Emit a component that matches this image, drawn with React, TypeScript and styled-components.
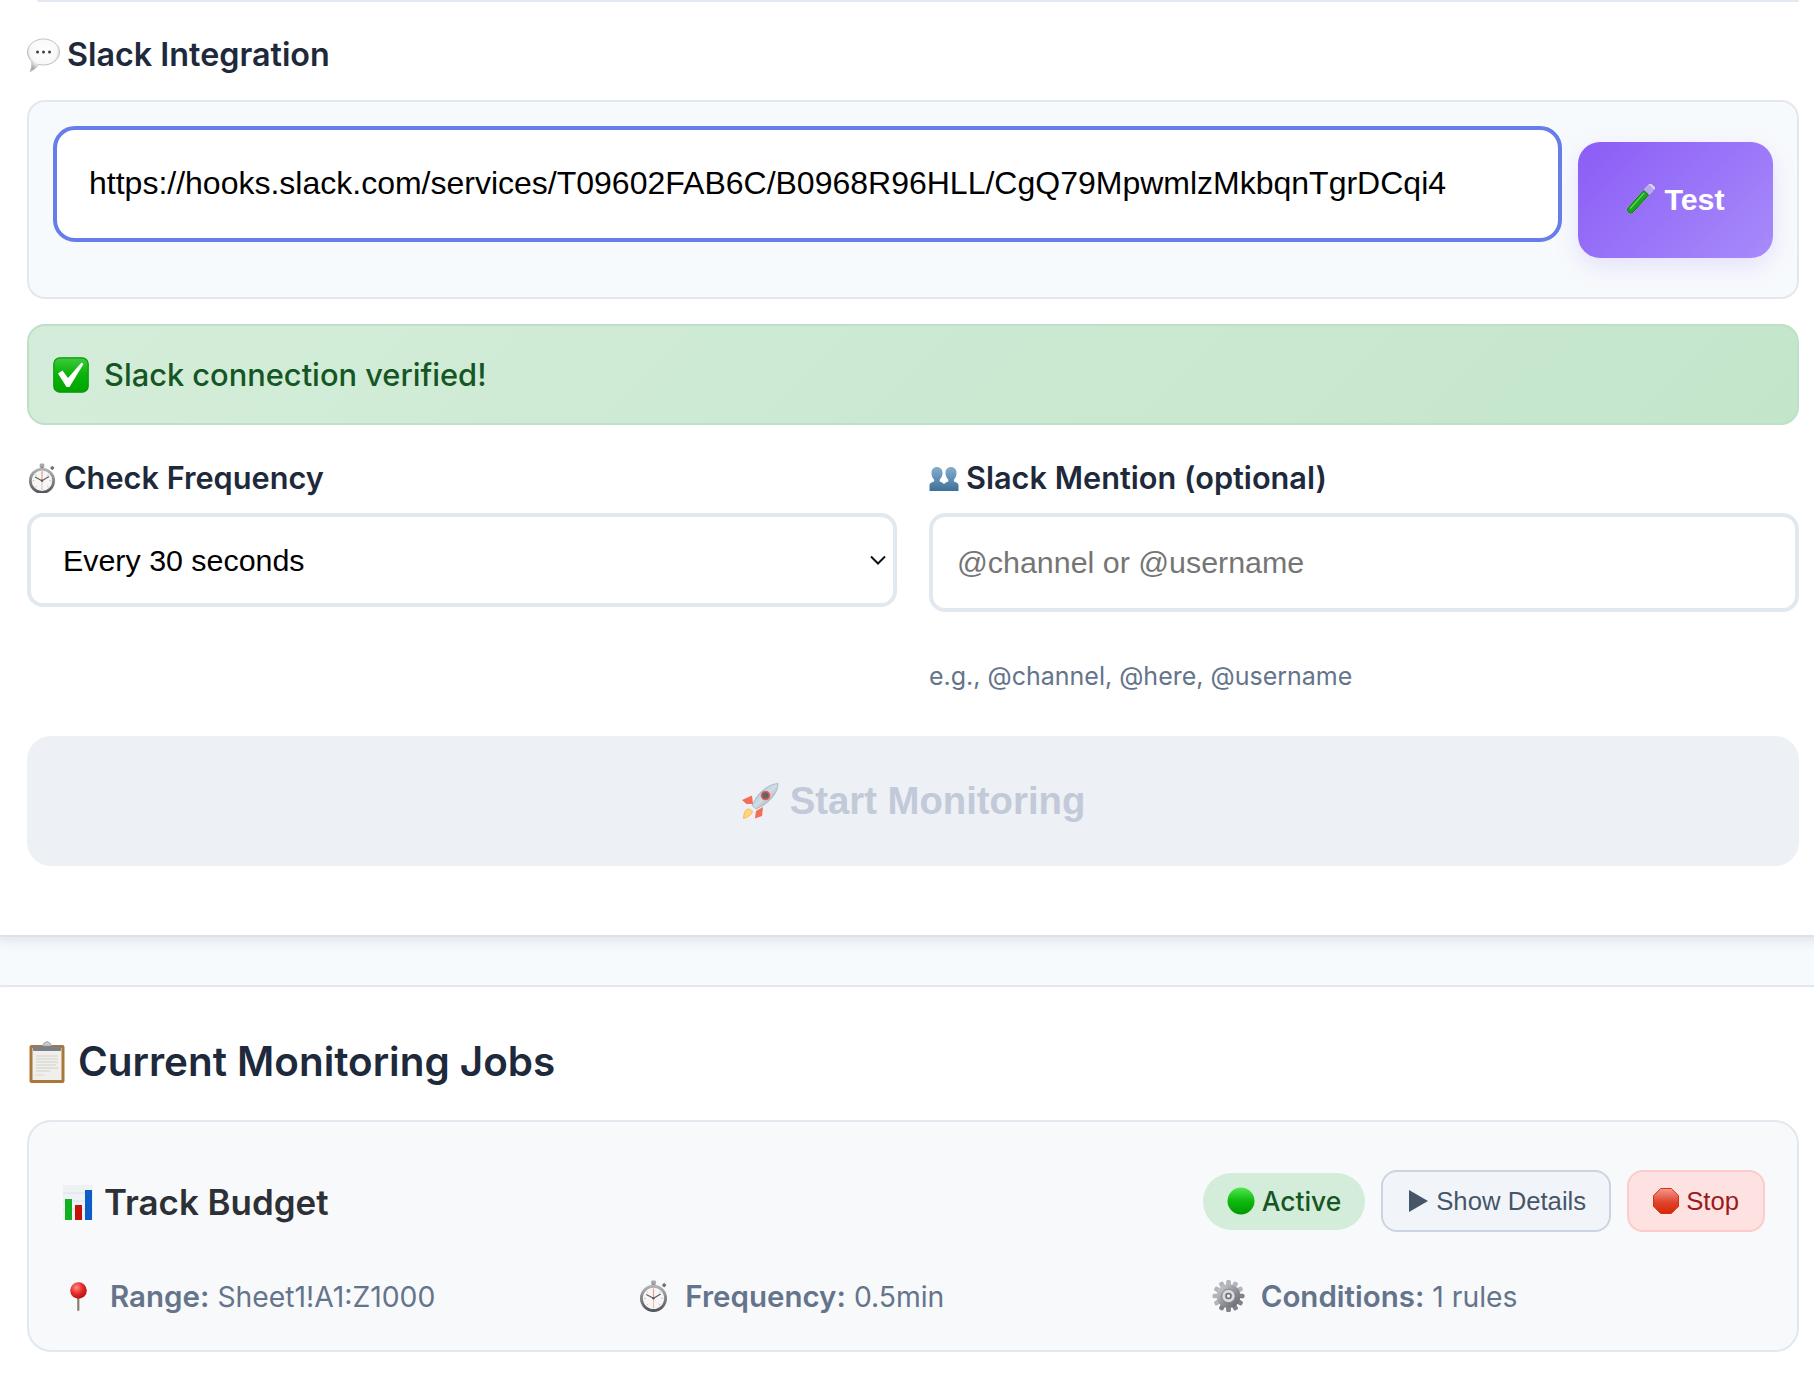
import React from "react";
import styled, { createGlobalStyle } from "styled-components";

const Global = createGlobalStyle`
  html, body { margin: 0; padding: 0; background: #f7fafc; height: 1384px; overflow: hidden; }
  #root { height: 1384px; overflow: hidden; }
  * { box-sizing: border-box; }
`;

const inter = `Inter, "Liberation Sans", sans-serif`;
const arial = `"Liberation Sans", Arial, sans-serif`;

const Page = styled.div`
  display: flex;
  flex-direction: column;
  gap: 48px;
`;

const Panel = styled.section`
  margin: 0 -20px 0 -16px;
  padding: 0 35px 69px 43px;
  background: #fff;
  border-bottom: 2px solid #dbe2ea;
  border-radius: 0 0 20px 20px;
  box-shadow: 0 4px 12px rgba(30, 50, 80, 0.1);
`;

const JobsPanel = styled.section`
  margin: 0 -20px 0 -16px;
  padding: 52px 35px 32px 43px;
  background: #fff;
  border-top: 2px solid #e2e8f0;
  border-radius: 20px 20px 0 0;
`;

const TopEdge = styled.div`
  height: 2px;
  margin-left: 10px;
  background: #e2e8f0;
  border-radius: 0 0 2px 2px;
`;

const SectionTitle = styled.h3`
  display: flex;
  align-items: center;
  gap: 7px;
  height: 36px;
  margin: 35px 0 27px;
  font: 600 32.3px/36px ${inter};
  color: #1e293b;
`;

const WebhookBox = styled.div`
  display: flex;
  align-items: flex-start;
  gap: 16px;
  padding: 24px 24px 39px;
  background: #f7fafc;
  border: 2px solid #e2e8f0;
  border-radius: 18px;
`;

const UrlInput = styled.input`
  flex: 1;
  min-width: 0;
  height: 116px;
  padding: 0 32px 1px;
  font: 400 32px ${arial};
  color: #000;
  background: #fff;
  border: 4px solid #667eea;
  border-radius: 22px;
  outline: none;
`;

const TestButton = styled.button`
  display: flex;
  align-items: center;
  justify-content: center;
  gap: 9px;
  flex: 0 0 195px;
  height: 116px;
  margin-top: 16px;
  padding: 0 0 2px;
  font: 700 30.4px ${arial};
  color: #fff;
  background: linear-gradient(135deg, #8b5cf6, #a78bfa);
  border: none;
  border-radius: 22px;
  box-shadow: 0 8px 24px rgba(139, 92, 246, 0.16);
`;

const Alert = styled.div`
  display: flex;
  align-items: center;
  gap: 15px;
  height: 101px;
  margin-top: 25px;
  padding: 0 24px;
  font: 500 30.8px ${inter};
  color: #155724;
  background: linear-gradient(135deg, #d4edda, #c3e6cb);
  border: 2px solid #bfe0c6;
  border-radius: 18px;
`;

const FieldGrid = styled.div`
  display: grid;
  grid-template-columns: 1fr 1fr;
  gap: 32px;
  margin-top: 35px;
`;

const Field = styled.div`
  display: flex;
  flex-direction: column;
  min-width: 0;
`;

const Label = styled.label`
  display: flex;
  align-items: center;
  gap: 7px;
  height: 36px;
  margin-bottom: 17px;
  font: 600 30.7px/36px ${inter};
  color: #1e293b;
`;

const SelectWrap = styled.div`
  position: relative;
  height: 94px;
`;

const Select = styled.select`
  width: 100%;
  height: 100%;
  padding: 0 32px;
  font: 400 30.4px ${arial};
  color: #000;
  background: #fff;
  border: 4px solid #e2e8f0;
  border-radius: 16px;
  appearance: none;
  outline: none;
`;

const Chevron = styled.svg`
  position: absolute;
  top: 40px;
  right: 9px;
  width: 20px;
  height: 14px;
`;

const TextInput = styled.input`
  width: 100%;
  height: 99px;
  padding: 0 24px;
  font: 400 30.4px ${arial};
  background: #fff;
  border: 4px solid #e2e8f0;
  border-radius: 16px;
  outline: none;
  &::placeholder { color: #757575; opacity: 1; }
`;

const Help = styled.div`
  margin-top: 48px;
  margin-bottom: 1px;
  font: 400 25px/32px ${inter};
  color: #64748b;
`;

const StartButton = styled.button`
  display: flex;
  align-items: center;
  justify-content: center;
  gap: 11px;
  width: 100%;
  height: 130px;
  margin-top: 43px;
  font: 700 38.3px ${arial};
  color: #c2c9d8;
  background: #edf0f5;
  border: none;
  border-radius: 24px;
`;

const JobsTitle = styled.h2`
  display: flex;
  align-items: center;
  gap: 12px;
  height: 46px;
  margin: 0 0 35px;
  font: 600 40.4px/46px ${inter};
  color: #1e293b;
`;

const JobCard = styled.article`
  padding: 48px 32px 36px;
  background: #f8f9fb;
  border: 2px solid #e2e8f0;
  border-radius: 24px;
`;

const JobHeader = styled.header`
  display: flex;
  align-items: center;
  justify-content: space-between;
  height: 62px;
`;

const JobName = styled.h4`
  display: flex;
  align-items: center;
  gap: 11px;
  margin: 2px 0 0 1px;
  font: 600 34.9px/40px ${inter};
  color: #2d3035;
`;

const JobActions = styled.div`
  display: flex;
  align-items: center;
  gap: 16px;
`;

const StatusPill = styled.span`
  display: flex;
  align-items: center;
  gap: 7px;
  height: 57px;
  padding: 0 24px;
  font: 500 26.4px ${inter};
  color: #155724;
  background: #d4edda;
  border-radius: 29px;
`;

const ActionButton = styled.button<{ $danger?: boolean }>`
  display: flex;
  align-items: center;
  gap: ${(p) => (p.$danger ? "7px" : "8px")};
  height: 62px;
  padding: 0 ${(p) => (p.$danger ? "24px" : "23px")} 0 ${(p) => (p.$danger ? "24px" : "26px")};
  font: 400 25.7px ${arial};
  color: ${(p) => (p.$danger ? "#991b1b" : "#475569")};
  background: ${(p) => (p.$danger ? "#fee2e2" : "#f1f5f9")};
  border: 2px solid ${(p) => (p.$danger ? "#fecaca" : "#cbd5e1")};
  border-radius: 16px;
`;

const MetaGrid = styled.div`
  display: grid;
  grid-template-columns: repeat(3, 1fr);
  gap: 22px;
  margin-top: 46px;
`;

const MetaItem = styled.div`
  display: flex;
  align-items: center;
  gap: 16px;
  height: 36px;
  padding-left: 1px;
  font: 400 28.3px/36px ${inter};
  color: #64748b;
  strong { font-size: 29.5px; font-weight: 600; margin-right: 8px; }
`;

const IconSlot = styled.span<{ $w: number }>`
  display: flex;
  align-items: center;
  justify-content: center;
  flex: 0 0 ${(p) => p.$w}px;
  width: ${(p) => p.$w}px;
  svg { display: block; flex: none; }
`;

const Faded = styled.span`
  display: flex;
  opacity: 0.95;
`;

const Bubble = () => (
  <svg width="33" height="34" viewBox="0 0 33 34">
    <defs>
      <radialGradient id="bub" cx=".5" cy=".36" r=".62">
        <stop offset="0" stopColor="#ffffff" />
        <stop offset=".68" stopColor="#f8f8f8" />
        <stop offset="1" stopColor="#a9adb1" />
      </radialGradient>
    </defs>
    <path d="M16.500 1C25.300 1 32.500 6.800 32.500 14S25.300 27 16.500 27c-1.800 0-3.500-.2-5-.7C9.500 29.500 6.500 32.500 3 33.500 4.600 30.500 5 27 4.800 23.400 2.100 21 .5 17.700.5 14 .5 6.800 7.700 1 16.500 1z" fill="url(#bub)" stroke="#b0b4b8" strokeWidth=".8" />
    <circle cx="10.500" cy="14" r="1.500" fill="#3c3f44" />
    <circle cx="16.500" cy="14" r="1.500" fill="#3c3f44" />
    <circle cx="22.500" cy="14" r="1.500" fill="#3c3f44" />
  </svg>
);

const TestTube = () => (
  <svg width="29" height="30" viewBox="0 0 29 30">
    <g transform="rotate(42 14.500 15)">
      <rect x="11" y="-3" width="7" height="36" rx="3.500" fill="#d9d2f5" fillOpacity=".55" stroke="#c8c4d0" strokeWidth=".9" />
      <path d="M11.200 6.500 H17.800 V29.500 a3.300 3.300 0 0 1 -6.600 0z" fill="#19a51f" stroke="#0e6f1a" strokeWidth=".9" />
      <path d="M13.200 8 V29" stroke="#6fdc6a" strokeWidth="1.100" />
      <rect x="10" y="-3.500" width="9" height="2.200" rx="1" fill="#dcd9e2" />
    </g>
  </svg>
);

const CheckBox = () => (
  <svg width="36" height="36" viewBox="0 0 36 36">
    <defs>
      <linearGradient id="chk" x1="0" y1="0" x2="0" y2="1">
        <stop offset="0" stopColor="#3ecb3e" />
        <stop offset=".45" stopColor="#0cb40c" />
        <stop offset="1" stopColor="#00a400" />
      </linearGradient>
    </defs>
    <rect x=".8" y=".8" width="34.400" height="34.400" rx="6" fill="url(#chk)" stroke="#0a980a" strokeWidth="1.200" />
    <path d="M5 16.500 L9.500 13.500 L15 21 L28.500 5.500 L30.500 7 L16.500 30 L13.500 30z" fill="#fff" />
  </svg>
);

const Stopwatch = ({ size, uid }: { size: number; uid: string }) => (
  <svg width={size} height={size * 1.1} viewBox="0 0 30 33">
    <defs>
      <linearGradient id={uid} x1="0" y1="0" x2="0" y2="1">
        <stop offset="0" stopColor="#b5b7ba" />
        <stop offset="1" stopColor="#4f5256" />
      </linearGradient>
    </defs>
    <rect x="12.500" y="0.500" width="5" height="5" rx="1.500" fill="#a5a8ac" />
    <rect x="14" y="4" width="2" height="3" fill="#77797d" />
    <rect x="24.500" y="3.500" width="3.500" height="3.500" rx=".8" transform="rotate(40 26 5)" fill="#6e7074" />
    <circle cx="15" cy="19" r="14" fill={`url(#${uid})`} />
    <circle cx="15" cy="19" r="11" fill="#f7f6f4" />
    <g stroke="#b5b6b8" strokeWidth=".9">
      <path d="M15 9v2M15 27v2M5 19h2M23 19h2M8 12l1.400 1.400M22 12l-1.400 1.400M8 26l1.400-1.400M22 26l-1.400-1.400" />
    </g>
    <path d="M15 19 L15 9" stroke="#eb9f85" strokeWidth="1.300" />
    <path d="M15 19 L7.500 15 M15 19 L22.500 14.500" stroke="#5b5d62" strokeWidth="1.200" />
    <path d="M15 19 L15 27" stroke="#f0b8a0" strokeWidth="1" />
    <circle cx="15" cy="19" r="1.300" fill="#5b5d62" />
  </svg>
);

const Busts = () => (
  <svg width="30" height="25" viewBox="0 0 30 25">
    <defs>
      <linearGradient id="bst" x1="0" y1="0" x2="0" y2="1">
        <stop offset="0" stopColor="#85aed0" />
        <stop offset="1" stopColor="#3f6f97" />
      </linearGradient>
    </defs>
    <path d="M8 1c3.300 0 5.500 2.500 5.500 6 0 3-1.500 5.500-2.800 6.800v1.700c2 .8 4 1.500 4.300 3v6.500H.5V18.500c.3-1.500 2.600-2.300 4.600-3v-1.700C3.800 12.500 2.500 10 2.500 7 2.500 3.500 4.700 1 8 1z" fill="url(#bst)" />
    <path d="M22 1c3.300 0 5.500 2.500 5.500 6 0 3-1.300 5.500-2.600 6.800v1.700c2 .8 4.300 1.600 4.600 3v6.500H15V18.500c.3-1.500 2.300-2.200 4.300-3v-1.700C18 12.500 16.500 10 16.500 7c0-3.500 2.200-6 5.500-6z" fill="url(#bst)" />
  </svg>
);

const Rocket = () => (
  <svg width="38" height="36" viewBox="0 0 38 36">
    <defs>
      <linearGradient id="rkt" x1="0" y1="0" x2="1" y2="1">
        <stop offset="0" stopColor="#6fb2ec" />
        <stop offset=".5" stopColor="#d4dbe2" />
        <stop offset="1" stopColor="#7f868e" />
      </linearGradient>
    </defs>
    <path d="M5 27 C8 25 11 27 11.500 29 C10 32 6 35 2.500 35.500 C3 32 3 29 5 27z" fill="#ffd76a" stroke="#ffaa55" strokeWidth=".8" />
    <path d="M11 12.500 L1 17 L5.500 21 L12 21z" fill="#f4674f" />
    <path d="M22 24 L21 33 L14 35.500 L15 28z" fill="#f4674f" />
    <path d="M37 .5 C29 1 20 7 15 15 L11 22.500 L15 26 L23 22 C31 16 37 9 37 .5z" fill="url(#rkt)" stroke="#8aa2b6" strokeWidth=".6" />
    <circle cx="24.500" cy="12.500" r="4" fill="#5a5e64" stroke="#e6574a" strokeWidth="1.600" />
  </svg>
);

const Clipboard = () => (
  <svg width="36" height="42" viewBox="0 0 36 42">
    <rect x="0.500" y="4" width="35" height="38" rx="2" fill="#a9773c" />
    <rect x="3.500" y="7" width="29" height="32" fill="#f0efeb" />
    <path d="M7 15h22M7 18h22M7 21h22M7 24h20M7 27h22M7 30h14" stroke="#cfcfcc" strokeWidth="1" />
    <path d="M6 34h9" stroke="#d8d8d5" strokeWidth="1" />
    <rect x="4" y="5" width="28" height="5" rx="1" fill="#7d7f83" />
    <path d="M13 5 L15 2 Q18 -1 21 2 L23 5z" fill="#c7cbd1" stroke="#90949a" strokeWidth=".7" />
  </svg>
);

const BarChart = () => (
  <svg width="30" height="35" viewBox="0 0 30 35">
    <rect width="30" height="35" fill="#eef2f5" />
    <path d="M0 8h30M0 16h30M0 24h30" stroke="#d5dde3" strokeWidth=".8" />
    <rect x="2" y="14" width="7" height="21" fill="#10b020" />
    <rect x="12" y="20" width="7" height="15" fill="#c41208" />
    <rect x="22" y="5" width="7" height="30" fill="#0d5cc8" />
  </svg>
);

const Pin = () => (
  <svg width="19" height="29" viewBox="0 0 19 29">
    <defs>
      <radialGradient id="pinr" cx=".38" cy=".32" r=".75">
        <stop offset="0" stopColor="#ff8c84" />
        <stop offset=".5" stopColor="#e62c28" />
        <stop offset="1" stopColor="#a80f10" />
      </radialGradient>
    </defs>
    <rect x="8.200" y="14" width="2.200" height="15" rx="1" fill="#8b7f70" />
    <circle cx="9.500" cy="8.500" r="8.300" fill="url(#pinr)" />
  </svg>
);

const Gear = () => {
  const teeth = Array.from({ length: 12 }, (_, i) => i * 30);
  return (
    <svg width="33" height="34" viewBox="0 0 32 32">
      <defs>
        <linearGradient id="gear" x1="0" y1="0" x2="1" y2="1">
          <stop offset="0" stopColor="#d3d6da" />
          <stop offset=".55" stopColor="#8e9196" />
          <stop offset="1" stopColor="#5d6065" />
        </linearGradient>
      </defs>
      {teeth.map((a) => (
        <rect key={a} x="13.700" y="0.500" width="4.600" height="6.500" rx="1.500" fill={a > 60 && a < 240 ? "#7f8287" : "#b2b5b9"} transform={`rotate(${a} 16 16)`} />
      ))}
      <circle cx="16" cy="16" r="11.500" fill="url(#gear)" />
      <circle cx="16" cy="16" r="6.500" fill="#d9dbde" stroke="#74777c" strokeWidth=".8" />
      <circle cx="16" cy="16" r="3.200" fill="#6a6d72" />
      <circle cx="16" cy="16" r="1.700" fill="#eceded" />
    </svg>
  );
};

const GreenDot = () => (
  <svg width="28" height="28" viewBox="0 0 28 28">
    <defs>
      <linearGradient id="dot" x1="0" y1="0" x2="0" y2="1">
        <stop offset="0" stopColor="#52e64f" />
        <stop offset=".5" stopColor="#0dbb0d" />
        <stop offset="1" stopColor="#039603" />
      </linearGradient>
    </defs>
    <circle cx="14" cy="14" r="13.500" fill="url(#dot)" />
  </svg>
);

const Play = () => (
  <svg width="19" height="22" viewBox="0 0 19 22">
    <path d="M0 0 L19 11 L0 22z" fill="#475569" />
  </svg>
);

const StopSign = () => (
  <svg width="26" height="26" viewBox="0 0 26 26">
    <defs>
      <linearGradient id="stp" x1="0" y1="0" x2="0" y2="1">
        <stop offset="0" stopColor="#f29a8c" />
        <stop offset=".55" stopColor="#e0432c" />
        <stop offset="1" stopColor="#d32a08" />
      </linearGradient>
    </defs>
    <path d="M7.700 .5h10.600l7.200 7.200v10.600l-7.200 7.200H7.700L.5 18.300V7.700z" fill="url(#stp)" stroke="#dc2d0c" strokeWidth="1" />
  </svg>
);

export default function App() {
  return (
    <Page>
      <Global />
      <Panel>
        <TopEdge />
        <SectionTitle>
          <IconSlot $w={33}><Bubble /></IconSlot>
          Slack Integration
        </SectionTitle>
        <WebhookBox>
          <UrlInput readOnly value="https://hooks.slack.com/services/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" />
          <TestButton>
            <TestTube />
            Test
          </TestButton>
        </WebhookBox>
        <Alert>
          <IconSlot $w={36}><CheckBox /></IconSlot>
          Slack connection verified!
        </Alert>
        <FieldGrid>
          <Field>
            <Label>
              <IconSlot $w={30}><Stopwatch size={28} uid="sw1" /></IconSlot>
              Check Frequency
            </Label>
            <SelectWrap>
              <Select defaultValue="30">
                <option value="30">Every 30 seconds</option>
              </Select>
              <Chevron viewBox="0 0 20 14">
                <path d="M3 3.500 L10 10.500 L17 3.500" fill="none" stroke="#111" strokeWidth="2" />
              </Chevron>
            </SelectWrap>
          </Field>
          <Field>
            <Label>
              <IconSlot $w={30}><Busts /></IconSlot>
              Slack Mention (optional)
            </Label>
            <TextInput placeholder="@channel or @username" />
            <Help>e.g., @channel, @here, @username</Help>
          </Field>
        </FieldGrid>
        <StartButton disabled>
          <Faded><Rocket /></Faded>
          Start Monitoring
        </StartButton>
      </Panel>
      <JobsPanel>
        <JobsTitle>
          <IconSlot $w={39}><Clipboard /></IconSlot>
          Current Monitoring Jobs
        </JobsTitle>
        <JobCard>
          <JobHeader>
            <JobName>
              <IconSlot $w={31}><BarChart /></IconSlot>
              Track Budget
            </JobName>
            <JobActions>
              <StatusPill><GreenDot />Active</StatusPill>
              <ActionButton><Play />Show Details</ActionButton>
              <ActionButton $danger><StopSign />Stop</ActionButton>
            </JobActions>
          </JobHeader>
          <MetaGrid>
            <MetaItem>
              <IconSlot $w={32}><Pin /></IconSlot>
              <span><strong>Range:</strong>Sheet1!A1:Z1000</span>
            </MetaItem>
            <MetaItem>
              <IconSlot $w={32}><Stopwatch size={29} uid="sw2" /></IconSlot>
              <span><strong>Frequency:</strong>0.5min</span>
            </MetaItem>
            <MetaItem>
              <IconSlot $w={32}><Gear /></IconSlot>
              <span><strong>Conditions:</strong>1 rules</span>
            </MetaItem>
          </MetaGrid>
        </JobCard>
      </JobsPanel>
    </Page>
  );
}
